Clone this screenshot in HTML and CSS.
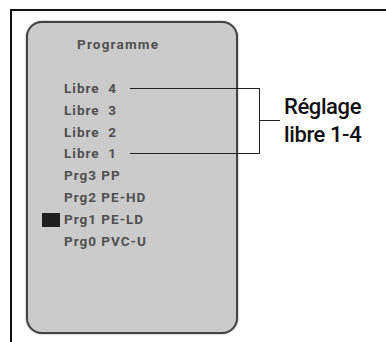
FILE: index.html
```html
<!DOCTYPE html>
<html lang="fr">
<head>
    <meta charset="UTF-8">
    <title>Programme</title>
    <link rel="stylesheet" href="styles.css">
</head>
<body>
    <div class="frame">
        <div class="panel">
            <div class="title">Programme</div>
            <ul class="list">
                <li>Libre&nbsp; 4</li>
                <li>Libre&nbsp; 3</li>
                <li>Libre&nbsp; 2</li>
                <li>Libre&nbsp; 1</li>
                <li>Prg3 PP</li>
                <li>Prg2 PE-HD</li>
                <li class="current">Prg1 PE-LD</li>
                <li>Prg0 PVC-U</li>
            </ul>
        </div>
        <span class="bracket"></span>
        <p class="label">Réglage<br>libre 1-4</p>
    </div>
</body>
</html>
```

FILE: styles.css
```css
/* Page */
body {
    margin: 0;
    background: #fff;
    font-family: "Roboto", "Liberation Sans", sans-serif;
}

/* Outer frame (top + left rule) */
.frame {
    position: relative;
    display: flex;
    align-items: flex-start;
    margin: 9px 0 0 10px;
    padding: 10px 0 0 14px;
    height: 321px;
    border-top: 2px solid #111;
    border-left: 2px solid #111;
}

/* Screen panel */
.panel {
    box-sizing: border-box;
    flex: none;
    width: 212px;
    height: 313px;
    background: #cbcbcb;
    border: 2px solid #444;
    border-radius: 16px;
    box-shadow: 0 0 1.5px #666;
    padding: 12px 0 0 36px;
}

.title {
    padding-left: 13px;
    font-size: 13.5px;
    font-weight: bold;
    letter-spacing: 1.2px;
    color: #505050;
    line-height: 18px;
    margin-bottom: 25px;
}

.list {
    list-style: none;
    margin: 0;
    padding: 0;
}

.list li {
    position: relative;
    font-size: 13.5px;
    font-weight: bold;
    letter-spacing: 1px;
    color: #505050;
    line-height: 21.8px;
    white-space: nowrap;
}

.list li.current::before {
    content: "";
    position: absolute;
    left: -22px;
    top: 4px;
    width: 18px;
    height: 14px;
    background: #1e1e1e;
}

/* Callout bracket */
.bracket {
    position: absolute;
    left: 118px;
    top: 77px;
    width: 129px;
    height: 64px;
    border: 1px solid #222;
    border-left: none;
}

.bracket::after {
    content: "";
    position: absolute;
    left: 100%;
    top: 31px;
    width: 21px;
    height: 1px;
    background: #222;
}

.label {
    margin: 72px 0 0 46px;
    font-size: 22px;
    font-weight: 500;
    letter-spacing: -0.4px;
    line-height: 28px;
    color: #111;
}
```
